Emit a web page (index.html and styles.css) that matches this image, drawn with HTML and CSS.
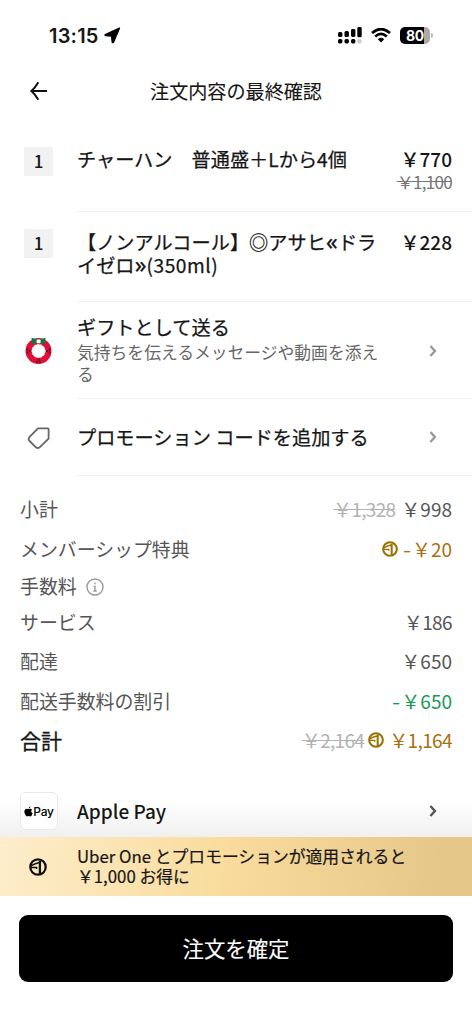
FILE: index.html
```html
<!DOCTYPE html>
<html lang="ja">
<head>
<meta charset="utf-8">
<title>注文内容の最終確認</title>
<link rel="stylesheet" href="styles.css">
</head>
<body>
<svg class="defs" width="0" height="0" aria-hidden="true">
  <symbol id="one" viewBox="0 0 18 18">
    <circle cx="9" cy="9" r="7.7" fill="none" stroke="currentColor" stroke-width="2.3"/>
    <path d="M1.8 7.9Q6.5 5.2 10.4 4.5M1.8 9.4H7.6V11" fill="none" stroke="currentColor" stroke-width="1.5"/>
    <path d="M10.9 3V16" fill="none" stroke="currentColor" stroke-width="2.3"/>
  </symbol>
  <symbol id="chevron" viewBox="0 0 8 12">
    <path d="M1.4 1L5.9 6L1.4 11" fill="none" stroke="currentColor" stroke-width="2.4"/>
  </symbol>
</svg>
<div class="screen">
  <div class="status">
    <span class="time">13:15</span>
    <svg class="loc" width="17" height="17" viewBox="0 0 17 17"><path d="M15.4 1.3L1.3 7.6Q.8 8.3 1.5 8.6L7.6 9.1L8.3 15.2Q8.9 16 9.4 15.2Z" stroke="#000" stroke-width="1.5" stroke-linejoin="round"/></svg>
    <svg class="cell" width="24" height="17" viewBox="0 0 24 17">
      <rect x="0" y="5" width="4.4" height="5" rx="1.6"/><rect x="6.5" y="4" width="4.4" height="6" rx="1.5"/><rect x="13" y="2" width="4.4" height="8" rx="1.4"/><rect x="19.3" y="0" width="4.4" height="10.3" rx="1.4"/>
      <rect x="0" y="12" width="4.4" height="4.4" rx="1.6"/><rect x="6.5" y="12" width="4.4" height="4.4" rx="1.6"/><rect x="13" y="12" width="4.4" height="4.4" rx="1.6"/><rect x="19.3" y="12" width="4.4" height="4.4" rx="1.6" fill="#ccc"/>
    </svg>
    <svg class="wifi" width="20" height="15" viewBox="0 0 20 15"><path d="M1 5.1Q10-3 19 5.1M4.2 8.5Q10 3.3 15.8 8.5" fill="none" stroke="#000" stroke-width="2.7"/><path d="M6.8 11.2Q10 8.4 13.2 11.2L10 14.6Z"/></svg>
    <span class="battery">80</span><span class="nub"></span>
  </div>

  <header class="header">
    <svg class="back" width="18" height="20" viewBox="0 0 18 20"><path d="M8.3 1.2Q5 7 1.4 10Q5 13 8.3 18.8M1.5 10H17" fill="none" stroke="#111" stroke-width="2"/></svg>
    <h1 class="title">注文内容の最終確認</h1>
  </header>

  <main>
    <section class="row item first">
      <div class="lead"><span class="qty">1</span></div>
      <div class="body"><p class="name">チャーハン　普通盛＋Lから4個</p><div class="prices"><div class="price">￥770</div><div class="old-price">￥1,100</div></div></div>
    </section>
    <section class="row item second">
      <div class="lead"><span class="qty">1</span></div>
      <div class="body"><p class="name">【ノンアルコール】◎アサヒ<span class="quote">«</span>ドラ<br>イゼロ<span class="quote">»</span><span class="size">(350ml)</span></p><div class="prices"><div class="price">￥228</div></div></div>
    </section>
    <section class="row gift">
      <div class="lead">
        <svg width="27" height="27" viewBox="0 0 27 27"><circle cx="13.5" cy="14" r="9.7" fill="none" stroke="#e10f38" stroke-width="6.6"/><circle cx="13.5" cy="14" r="6.6" fill="#fff" stroke="#fff" stroke-dasharray="1.6 1.7"/><path d="M6.5 .8L12.8 2.6V6L7 7.2ZM20.5 .8L14.2 2.6V6L20 7.2Z" fill="#087b43"/><rect x="11.6" y="2.6" width="4" height="3.6" rx="1" fill="#fff"/><g fill="#43121e"><circle cx="2.4" cy="12.6" r="1"/><circle cx="2.4" cy="15.4" r="1"/><circle cx="4.8" cy="14" r="1"/><circle cx="24.6" cy="12.6" r="1"/><circle cx="24.6" cy="15.4" r="1"/><circle cx="22.2" cy="14" r="1"/><circle cx="13.5" cy="22.7" r="1"/><circle cx="12" cy="25" r="1"/><circle cx="15" cy="25" r="1"/></g></svg>
      </div>
      <div class="body"><div class="copy"><p class="name">ギフトとして送る</p><p class="note">気持ちを伝えるメッセージや動画を添え<br>る</p></div><svg class="chev" width="8" height="12"><use href="#chevron"/></svg></div>
    </section>
    <section class="row promo">
      <div class="lead"><svg width="24" height="24" viewBox="0 0 24 24"><path d="M11 2.3H20.8Q21.6 2.3 21.6 3.1V12.7L12.6 21.3Q10.8 22.8 9 21.3L2.6 15Q.8 13.2 2.4 11.2Z" fill="none" stroke="#666" stroke-width="1.8" stroke-linejoin="round"/></svg></div>
      <div class="body"><p class="name">プロモーション コードを追加する</p><svg class="chev" width="8" height="12"><use href="#chevron"/></svg></div>
    </section>

    <dl class="summary">
      <div class="line h40"><dt>小計</dt><dd><s>￥1,328</s><span class="amount">￥998</span></dd></div>
      <div class="line h39 gold"><dt>メンバーシップ特典</dt><dd><svg class="one" width="16" height="16"><use href="#one"/></svg><span class="amount"><span class="minus">-</span>￥20</span></dd></div>
      <div class="line h35"><dt>手数料</dt><dd class="info"><svg width="18" height="18" viewBox="0 0 18 18"><circle cx="9" cy="9" r="8" fill="none" stroke="#999" stroke-width="1.4"/><path d="M9 4.6V6.3M7.5 8.4H9V13M7.3 13H10.8" fill="none" stroke="#999" stroke-width="1.4"/></svg></dd></div>
      <div class="line h37"><dt>サービス</dt><dd><span class="amount tight">￥186</span></dd></div>
      <div class="line h42"><dt>配達</dt><dd><span class="amount">￥650</span></dd></div>
      <div class="line h38 green"><dt>配送手数料の割引</dt><dd><span class="amount"><span class="minus">-</span>￥650</span></dd></div>
      <div class="line h40 gold total"><dt>合計</dt><dd><s>￥2,164</s><svg class="one" width="16" height="16"><use href="#one"/></svg><span class="amount tight">￥1,164</span></dd></div>
    </dl>

    <section class="payment">
      <span class="apple"><svg width="9" height="11" viewBox="0 0 8 10"><path d="M5.7.2Q5.8 1.7 4.1 2.2Q4.1.8 5.7.2ZM7.3 3.3Q5.3 4.8 7.8 6.5Q6.9 9.3 5.6 9.5Q4.3 8.9 3.2 9.4Q1.9 9.8.8 7.6Q-.5 4.4 1.1 2.9Q2.1 2.1 3.9 2.8Q6.1 1.8 7.3 3.3Z"/></svg>Pay</span>
      <span class="method">Apple Pay</span>
      <svg class="chev" width="8" height="12"><use href="#chevron"/></svg>
    </section>
  </main>

  <aside class="banner"><svg class="badge" width="18" height="18"><use href="#one"/></svg><p>Uber One とプロモーションが適用されると<br>￥1,000 お得に</p></aside>
  <footer class="footer"><button class="confirm">注文を確定</button></footer>
</div>
</body>
</html>
```
FILE: styles.css
```css
* { box-sizing: border-box; }
body, h1, p, dl, dt, dd { margin: 0; padding: 0; }
body {
  background: #fff;
  color: #161616;
  font-family: "Noto Sans CJK JP", sans-serif;
  font-size: 19px;
  font-weight: 400;
}
.defs { display: block; height: 0; }
.screen { width: 472px; height: 1024px; overflow: hidden; display: flex; flex-direction: column; }
.status { height: 64px; padding: 7px 39px 0 49px; display: flex; align-items: center; flex: none; }
.time { font: 600 20px/24px Inter, sans-serif; letter-spacing: .2px; width: 51px; white-space: nowrap; }
.loc { margin-left: 4px; }
.cell { margin-left: auto; }
.wifi { margin: 0 9px 0 9px; }
.battery {
  width: 30px; height: 17px; border-radius: 5px;
  background: linear-gradient(90deg, #000 0 80%, #aaa 80%);
  color: #fff; font: 700 14px/17px Inter, sans-serif; letter-spacing: -.3px; text-align: center;
}
.nub { width: 2px; height: 5px; margin-left: 1px; border-radius: 0 2px 2px 0; background: #bbb; }
.header { height: 54px; display: flex; align-items: center; padding-left: 30px; flex: none; }
.title { flex: 1; margin-left: -48px; text-align: center; font-size: 19.1px; font-weight: 400; line-height: 28px; padding-bottom: 1px; -webkit-text-stroke: .1px; }
.row { display: flex; }
.lead { width: 77px; flex: none; display: flex; justify-content: center; align-items: center; }
.body { flex: 1; min-width: 0; display: flex; justify-content: space-between; padding-right: 20px; border-bottom: 1px solid #f1f1f1; }
.item .lead { align-items: flex-start; }
.qty { width: 29px; height: 29px; background: #f2f2f2; font-size: 17px; line-height: 27px; font-weight: 500; text-align: center; }
.name { font-size: 19.2px; line-height: 23px; font-weight: 400; -webkit-text-stroke: .25px; white-space: nowrap; }
.first { height: 94px; }
.first .lead { padding-top: 29px; }
.first .body { padding-top: 30px; }
.second { height: 90px; }
.second .lead { padding-top: 17px; }
.second .body { padding-top: 19px; }
.quote { display: inline-block; width: 12px; text-align: center; font: 400 23px/20px "Noto Sans", sans-serif; }
.size { letter-spacing: .5px; }
.prices { text-align: right; margin-top: -1px; }
.price { line-height: 23px; font-weight: 500; }
.old-price { font-size: 17px; line-height: 22px; letter-spacing: -.7px; margin-top: 1px; color: #767676; text-decoration: line-through; }
.gift { height: 97px; }
.gift .body { padding-top: 14px; }
.note { color: #666; font-size: 16.8px; line-height: 22px; margin-top: 2px; white-space: nowrap; }
.promo { height: 77px; }
.promo .body { align-items: center; }
.chev { color: #999; margin-right: 15px; flex: none; }
.gift .chev { margin-top: 29px; }
.summary { padding: 13px 20px 1px; color: #565656; }
.line { display: flex; align-items: center; justify-content: space-between; line-height: 24px; }
.line dt { font-size: 18.9px; }
.line dd { display: flex; align-items: center; white-space: nowrap; }
.line s { color: #b3b3b3; margin-right: 6px; letter-spacing: -.7px; }
.total s { margin-right: 4px; }
.tight { letter-spacing: -.6px; }
.minus { display: inline-block; width: 9px; transform: scaleX(1.25); transform-origin: left; }
.line .info { margin: 2px auto 0 9px; }
.line .one { color: #9b7100; margin-right: 5px; }
.gold .amount { color: #a96f10; }
.green .amount { color: #189a57; }
.total dt { color: #161616; font-size: 21px; font-weight: 400; -webkit-text-stroke: .3px; }
.h35 { height: 35px; }
.h37 { height: 37px; }
.h38 { height: 38px; }
.h39 { height: 39px; }
.h40 { height: 40px; }
.h42 { height: 42px; }
.payment { height: 76px; padding: 24px 20px 0; display: flex; align-items: center; background: linear-gradient(#fff 52%, #f0f0f0); }
.apple {
  width: 38px; height: 38px; border: 1px solid #e8e8e8; border-radius: 6px; background: #fff;
  display: flex; align-items: center; justify-content: center;
  font: 500 12px/15px Inter, sans-serif; letter-spacing: -.2px; color: #000;
}
.method { margin-left: 19px; flex: 1; font-weight: 500; line-height: 24px; padding-bottom: 1px; }
.payment .chev { color: #555; }
.banner { height: 59px; flex: none; display: flex; align-items: center; background: linear-gradient(100deg, #fdedcb, #f9dc9d 48%, #e5c78a 92%); font-size: 16.8px; line-height: 20px; }
.badge { width: 18px; margin: 0 30px 0 29px; flex: none; color: #111; }
.banner p { white-space: nowrap; padding-bottom: 2px; -webkit-text-stroke: .2px; }
.footer { padding: 19px 19px 0; }
.confirm { display: block; width: 434px; height: 67px; border: 0; border-radius: 9px; background: #000; color: #fff; font: 400 21.4px/30px "Noto Sans CJK JP", sans-serif; -webkit-text-stroke: .1px; padding: 0 0 2px; }
```
